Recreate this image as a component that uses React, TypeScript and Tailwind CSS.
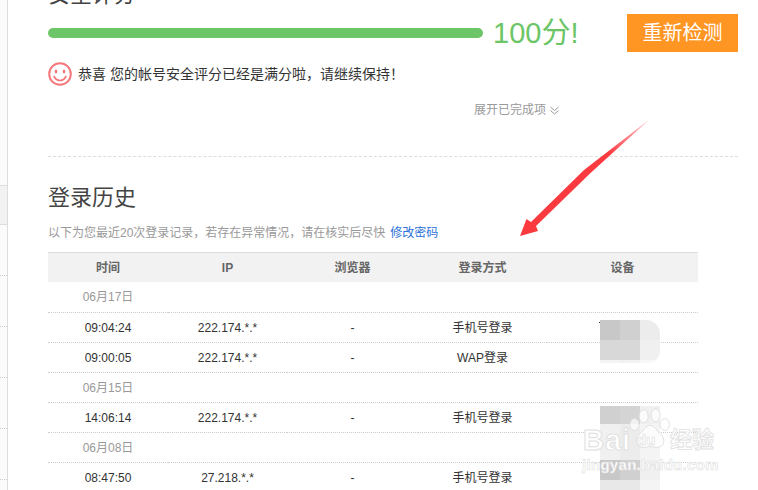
const font = "font-['Liberation_Sans','Noto_Sans_CJK_SC',sans-serif]"

type Row = { date?: string; time?: string; ip?: string; way?: string; first?: boolean }

const rows: Row[] = [
  { date: '06月17日', first: true },
  { time: '09:04:24', ip: '222.174.*.*', way: '手机号登录' },
  { time: '09:00:05', ip: '222.174.*.*', way: 'WAP登录' },
  { date: '06月15日' },
  { time: '14:06:14', ip: '222.174.*.*', way: '手机号登录' },
  { date: '06月08日' },
  { time: '08:47:50', ip: '27.218.*.*', way: '手机号登录' },
]

function Smile() {
  return (
    <svg viewBox="0 0 24 24" className="h-6 w-6 shrink-0" fill="none" stroke="#f4777b" strokeWidth="2">
      <circle cx="12" cy="12" r="10.8" />
      <ellipse cx="8" cy="9.5" rx="1.3" ry="2" fill="#f4777b" stroke="none" />
      <ellipse cx="16" cy="9.5" rx="1.3" ry="2" fill="#f4777b" stroke="none" />
      <path d="M6 14.5c1.5 2.8 3.6 4 6 4s4.500-1.200 6-4" strokeWidth="1.600" strokeLinecap="round" />
    </svg>
  )
}

function Chevrons() {
  return (
    <svg viewBox="0 0 9 9" className="ml-[4px] h-[9px] w-[9px]" fill="none" stroke="#999" strokeWidth="1">
      <path d="M.5 1l4 3.500 4-3.500M.5 4.500l4 3.500 4-3.500" />
    </svg>
  )
}

function Arrow() {
  return (
    <svg className="pointer-events-none absolute left-[510px] top-[110px] h-[135px] w-[150px]" viewBox="510 110 150 135">
      <defs>
        <linearGradient id="tail" x1="650" y1="119" x2="610" y2="155" gradientUnits="userSpaceOnUse">
          <stop offset="0" stopColor="#ffd0d4" />
          <stop offset="1" stopColor="#fb3a40" />
        </linearGradient>
      </defs>
      <polygon points="650,119 590,173.500 536,226 538,231 520,236 526.500,219 531,222 584,170" fill="url(#tail)" />
    </svg>
  )
}

// blurred-out device column, drawn as blocks over the table
function Mosaic({ className, cells }: { className: string; cells: string[] }) {
  return (
    <div className={className}>
      {cells.map((c, i) => (
        <div key={i} style={{ backgroundColor: c }} />
      ))}
    </div>
  )
}

function Watermark() {
  return (
    <div className="pointer-events-none absolute left-[582px] top-[411px] h-[72px] w-[140px] text-white">
      <svg viewBox="0 0 50 48" className="absolute left-[46px] top-[-3px] h-[44px] w-[46px]" fill="#fff" fillOpacity="0.7" stroke="#ddd" strokeWidth="1">
        <ellipse cx="17" cy="9" rx="5" ry="7" />
        <ellipse cx="30" cy="8" rx="5" ry="7" />
        <ellipse cx="7" cy="18" rx="5" ry="6.500" />
        <ellipse cx="40" cy="18" rx="5" ry="6.500" />
        <path d="M24 19c5 0 7 6 12 10 5 5 4 14-5 14-3 0-5-1-7-1s-4 1-7 1c-9 0-10-9-5-14 5-4 7-10 12-10z" />
      </svg>
      <div className={`${font} absolute left-[1px] top-[13px] text-[29px] leading-[32px] font-bold tracking-[1px] text-white [-webkit-text-stroke:1px_#e0e0e0]`}>Bai</div>
      <div className={`${font} absolute left-[55px] top-[20px] text-[15px] leading-[18px] font-bold text-white [-webkit-text-stroke:0.6px_#e0e0e0]`}>du</div>
      <div className={`${font} absolute left-[88px] top-[15px] text-[22px] leading-[28px] font-bold text-white [-webkit-text-stroke:0.8px_#e0e0e0]`}>经验</div>
      <div className={`${font} absolute left-[0px] top-[45px] text-[15px] leading-[18px] font-bold tracking-[0.3px] text-white [-webkit-text-stroke:0.6px_#e0e0e0]`}>jingyan.baidu.com</div>
    </div>
  )
}

export default function App() {
  return (
    <div className={`${font} relative flex h-[490px] w-[758px] overflow-hidden bg-white`}>
      <div className="h-full w-[8px] shrink-0 border-r border-[#ddd] bg-[#fbfbfb]">
        <div className="h-[185px]" />
        <div className="h-[40px] border-y border-[#ddd] bg-[#f2f2f2]" />
        {[0, 1, 2, 3, 4].map((i) => (
          <div key={i} className="h-[51px] border-b border-dotted border-[#ccc]" />
        ))}
      </div>

      <div className="w-[730px] pl-[40px]">
        <h2 className="-mt-[16px] h-[22px] text-[22px] leading-[22px] font-normal text-[#444]">安全评分</h2>

        <div className="mt-[8px] flex h-[38px] items-center">
          <div className="h-[10px] w-[435px] rounded-full bg-[#6cc566]" />
          <span className="ml-[10px] text-[29px] leading-[38px] text-[#6cc566]">100分!</span>
          <button className="ml-auto h-[38px] w-[111px] bg-[#ff9522] text-[20px] text-white">重新检测</button>
        </div>

        <div className="mt-[10px] flex h-[24px] items-center text-[14px] text-[#333]">
          <Smile />
          <span className="ml-[6px]">恭喜 您的帐号安全评分已经是满分啦，请继续保持！</span>
        </div>

        <div className="mt-[17px] flex h-[14px] items-center pl-[426px] text-[12px] text-[#999]">
          展开已完成项
          <Chevrons />
        </div>

        <div className="mt-[39px] border-t border-dashed border-[#ddd]" />

        <h2 className="mt-[30px] h-[22px] text-[22px] leading-[22px] font-normal text-[#444]">登录历史</h2>

        <p className="mt-[18px] h-[12px] text-[12px] leading-[12px] text-[#999]">
          以下为您最近20次登录记录，若存在异常情况，请在核实后尽快
          <a className="ml-[5px] text-[#2b72d8]">修改密码</a>
        </p>

        <table className="mt-[13px] w-[650px] table-fixed border-separate border-spacing-0 text-center text-[12px] text-[#333]">
          <colgroup>
            <col className="w-[120px]" />
            <col className="w-[119px]" />
            <col className="w-[131px]" />
            <col className="w-[129px]" />
            <col className="w-[151px]" />
          </colgroup>
          <thead>
            <tr className="h-[30px] bg-[#f2f2f2] font-bold text-[#666]">
              {['时间', 'IP', '浏览器', '登录方式', '设备'].map((h) => (
                <th key={h} className="border-t border-[#ddd] p-0">{h}</th>
              ))}
            </tr>
          </thead>
          <tbody>
            {rows.map((r, i) =>
              r.date ? (
                <tr key={i} className={r.first ? 'h-[31px]' : 'h-[30px]'}>
                  <td className="border-b border-dotted border-[#ccc] p-0 text-[#999]">{r.date}</td>
                  <td colSpan={4} className="border-b border-dotted border-[#ccc] p-0" />
                </tr>
              ) : (
                <tr key={i} className="h-[30px]">
                  <td className="border-b border-dotted border-[#ccc] p-0">{r.time}</td>
                  <td className="border-b border-dotted border-[#ccc] p-0">{r.ip}</td>
                  <td className="border-b border-dotted border-[#ccc] p-0">-</td>
                  <td className="border-b border-dotted border-[#ccc] p-0">{r.way}</td>
                  <td className="border-b border-dotted border-[#ccc] p-0" />
                </tr>
              ),
            )}
          </tbody>
        </table>
      </div>

      <div className="absolute left-[599px] top-[322px] h-[1px] w-[2px] bg-[#333]" />
      <div className="absolute left-[600px] top-[361px] h-[1px] w-[4px] bg-[#333]" />
      <Mosaic
        className="absolute left-[600px] top-[320px] grid h-[43px] w-[60px] grid-cols-3 grid-rows-[20px_20px_3px] overflow-hidden rounded-tr-[14px] rounded-br-[12px]"
        cells={['#c8c8c8', '#d0d0d0', '#ececec', '#d8d8d8', '#d8d8d8', '#f0f0f0', '#f4f4f4', '#f2f2f2', '#f8f8f8']}
      />
      <Mosaic
        className="absolute left-[600px] top-[406px] grid h-[84px] w-[60px] grid-cols-3 grid-rows-[18px_36px_20px_10px]"
        cells={['#d0d0d0', '#d4d4d4', '#f0f0f0', '#f0f0f0', '#ececec', '#f4f4f4', '#c8c8c8', '#d0d0d0', '#f0f0f0', '#e8e8e8', '#e8e8e8', '#f4f4f4']}
      />
      <Watermark />
      <Arrow />
    </div>
  )
}
